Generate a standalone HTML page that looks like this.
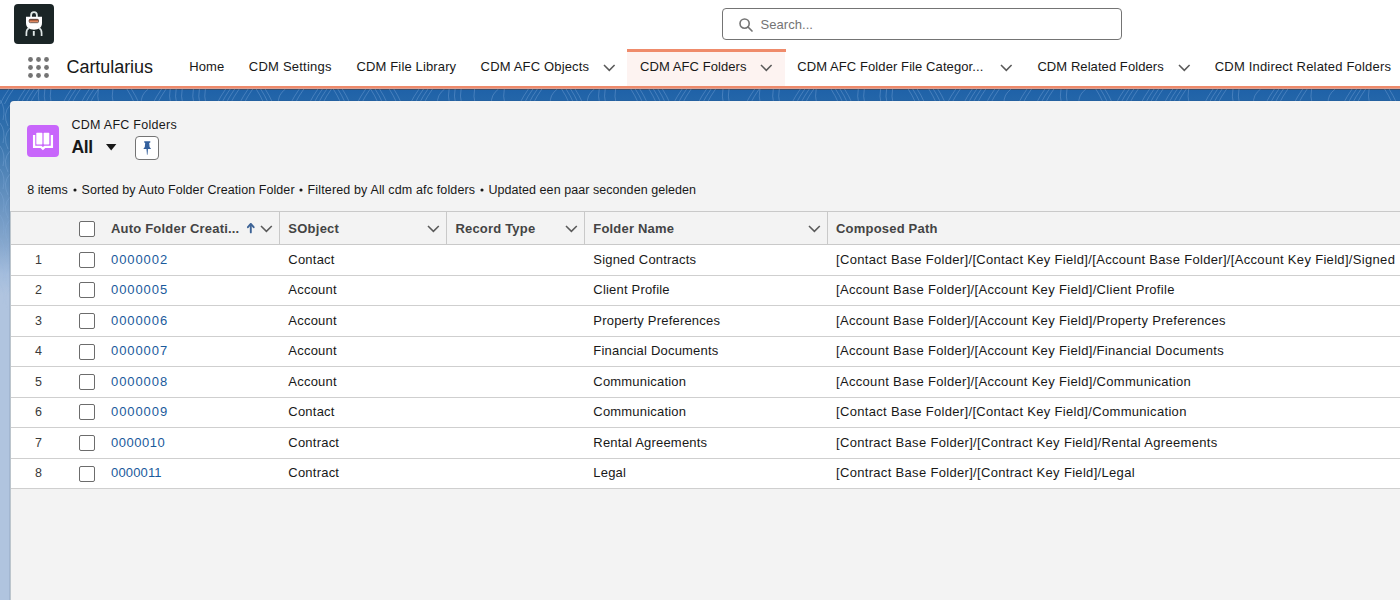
<!DOCTYPE html>
<html><head><meta charset="utf-8"><title>CDM AFC Folders</title>
<style>
html,body{margin:0;padding:0;}
body{width:1400px;height:600px;overflow:hidden;position:relative;background:#b0c4df;font-family:"Liberation Sans", sans-serif;}
.a{position:absolute;}
.t{position:absolute;white-space:nowrap;line-height:1;}
svg.a{overflow:visible;}
</style></head><body>
<div class="a" style="left:0;top:0;width:1400px;height:86px;background:#fff"></div>
<div class="a" style="left:14px;top:4px;width:40px;height:40px;background:#1a2526;border-radius:4px"></div>
<svg class="a" style="left:14px;top:4px" width="40" height="40" viewBox="0 0 40 40">
 <defs><linearGradient id="slot" x1="0" y1="0" x2="0" y2="1"><stop offset="0" stop-color="#6b3a26"/><stop offset="0.55" stop-color="#d9774d"/><stop offset="1" stop-color="#f0c8b0"/></linearGradient></defs>
 <path d="M17.1 12.9 V11.2 A2.9 3 0 0 1 22.9 11.2 V12.9" fill="none" stroke="#dfe8e6" stroke-width="1.8"/>
 <path d="M12 12.75 H28 V19 C28 23.6 24.6 25.7 20 25.7 C15.4 25.7 12 23.6 12 19 Z" fill="#ffffff"/>
 <rect x="15.2" y="15.3" width="9.3" height="3.4" rx="1.1" fill="url(#slot)" stroke="#3e2a22" stroke-width="0.7"/>
 <path d="M14.9 24.3 C13.2 24.9 12.4 26.4 12.4 29 V32" fill="none" stroke="#dfe7e6" stroke-width="1.7"/>
 <path d="M25.1 24.3 C26.8 24.9 27.6 26.4 27.6 29 V32" fill="none" stroke="#dfe7e6" stroke-width="1.7"/>
 <rect x="18.85" y="27" width="1.9" height="4.8" fill="#dfe7e6"/>
</svg>
<div class="a" style="left:722px;top:8px;width:400px;height:32px;box-sizing:border-box;border:1px solid #747474;border-radius:4px;background:#fff"></div>
<svg class="a" style="left:738px;top:17px" width="16" height="16" viewBox="0 0 16 16">
 <circle cx="6.6" cy="6.6" r="4.6" fill="none" stroke="#747474" stroke-width="1.6"/>
 <path d="M10 10 L14 14" stroke="#747474" stroke-width="1.7" stroke-linecap="round"/>
</svg>
<div class="t" style="left:760.50px;top:17.90px;font-size:13px;color:#747474;letter-spacing:0.05px;">Search...</div>
<svg class="a" style="left:24px;top:53px" width="30" height="30" viewBox="0 0 30 30"><circle cx="6.5" cy="6.5" r="2.4" fill="#747474"/><circle cx="6.5" cy="14.5" r="2.4" fill="#747474"/><circle cx="6.5" cy="22.5" r="2.4" fill="#747474"/><circle cx="14.5" cy="6.5" r="2.4" fill="#747474"/><circle cx="14.5" cy="14.5" r="2.4" fill="#747474"/><circle cx="14.5" cy="22.5" r="2.4" fill="#747474"/><circle cx="22.5" cy="6.5" r="2.4" fill="#747474"/><circle cx="22.5" cy="14.5" r="2.4" fill="#747474"/><circle cx="22.5" cy="22.5" r="2.4" fill="#747474"/></svg>
<div class="t" style="left:66.50px;top:57.76px;font-size:18px;color:#181818;letter-spacing:-0.05px;">Cartularius</div>
<div class="a" style="left:627px;top:49px;width:158px;height:37px;background:#fdf3f1"></div>
<div class="a" style="left:627px;top:49px;width:158.5px;height:3px;background:#ef8b6b"></div>
<div class="t" style="left:189.30px;top:60.00px;font-size:13px;color:#181818;letter-spacing:0.1px;">Home</div>
<div class="t" style="left:248.80px;top:60.00px;font-size:13px;color:#181818;letter-spacing:0.22px;">CDM Settings</div>
<div class="t" style="left:356.50px;top:60.00px;font-size:13px;color:#181818;letter-spacing:0.14px;">CDM File Library</div>
<div class="t" style="left:480.60px;top:60.00px;font-size:13px;color:#181818;letter-spacing:0.16px;">CDM AFC Objects</div>
<div class="t" style="left:640.00px;top:60.00px;font-size:13px;color:#181818;letter-spacing:0.07px;">CDM AFC Folders</div>
<div class="t" style="left:797.20px;top:60.00px;font-size:13px;color:#181818;letter-spacing:0.09px;">CDM AFC Folder File Categor...</div>
<div class="t" style="left:1037.40px;top:60.00px;font-size:13px;color:#181818;letter-spacing:0.07px;">CDM Related Folders</div>
<div class="t" style="left:1214.80px;top:60.00px;font-size:13px;color:#181818;letter-spacing:0.18px;">CDM Indirect Related Folders</div>
<svg class="a" style="left:601.70px;top:63.20px" width="14.60" height="9.30" viewBox="0 0 14.60 9.30"><path d="M2 2 L7.30 7.30 L12.60 2" fill="none" stroke="#5a5a5a" stroke-width="1.55" stroke-linecap="butt" stroke-linejoin="miter"/></svg>
<svg class="a" style="left:758.90px;top:63.20px" width="14.60" height="9.30" viewBox="0 0 14.60 9.30"><path d="M2 2 L7.30 7.30 L12.60 2" fill="none" stroke="#5a5a5a" stroke-width="1.55" stroke-linecap="butt" stroke-linejoin="miter"/></svg>
<svg class="a" style="left:998.50px;top:63.20px" width="14.60" height="9.30" viewBox="0 0 14.60 9.30"><path d="M2 2 L7.30 7.30 L12.60 2" fill="none" stroke="#5a5a5a" stroke-width="1.55" stroke-linecap="butt" stroke-linejoin="miter"/></svg>
<svg class="a" style="left:1176.50px;top:63.20px" width="14.60" height="9.30" viewBox="0 0 14.60 9.30"><path d="M2 2 L7.30 7.30 L12.60 2" fill="none" stroke="#5a5a5a" stroke-width="1.55" stroke-linecap="butt" stroke-linejoin="miter"/></svg>
<div class="a" style="left:0;top:86px;width:1400px;height:2px;background:#ee8a6b"></div>
<div class="a" style="left:0;top:88px;width:1400px;height:1px;background:#d9a297"></div>
<div class="a" style="left:0;top:89px;width:1400px;height:1px;background:#3a4f6a"></div>
<div class="a" style="left:0;top:90px;width:1400px;height:510px;background:linear-gradient(to bottom,#1f62a8 0px,#3371ac 44px,#5a8abb 94px,#86a7cd 154px,#a4bddd 184px,#b0c4df 205px,#b0c4df 510px)"></div>
<svg class="a" style="left:0;top:0" width="1400" height="600" viewBox="0 0 1400 600"><defs><linearGradient id="fadeT" x1="0" y1="0" x2="0" y2="1"><stop offset="0.15" stop-color="#fff" stop-opacity="1"/><stop offset="0.45" stop-color="#fff" stop-opacity="0"/></linearGradient><mask id="mT"><rect x="0" y="89" width="1400" height="511" fill="url(#fadeT)"/></mask></defs><path d="M0.0 104 Q4.0 96 9.0 89 M4.5 104 Q8.5 96 13.5 89 M16.2 104 Q20.2 96 25.2 89 M20.7 104 Q24.7 96 29.7 89 M25.2 104 Q29.2 96 34.2 89 M29.7 104 Q33.7 96 38.7 89 M38.9 89 Q37.4 96 39.4 104 M44.9 89 Q43.4 96 45.4 104 M50.9 89 Q49.4 96 51.4 104 M62.4 104 Q66.4 96 71.4 89 M66.9 104 Q70.9 96 75.9 89 M71.4 104 Q75.4 96 80.4 89 M80.5 104 Q84.5 96 89.5 89 M85.0 104 Q89.0 96 94.0 89 M89.5 104 Q93.5 96 98.5 89 M98.4 89 Q96.9 96 98.9 104 M112.9 89 Q111.4 96 113.4 104 M126.9 89 Q130.9 95 134.9 104 M131.4 89 Q135.4 95 139.4 104 M148.3 89 Q140.3 95 141.3 104 M152.6 104 Q156.6 96 161.6 89 M157.1 104 Q161.1 96 166.1 89 M170.2 89 Q168.7 96 170.7 104 M176.2 89 Q174.7 96 176.7 104 M182.2 89 Q180.7 96 182.7 104 M193.4 89 Q191.9 96 193.9 104 M199.4 89 Q197.9 96 199.9 104 M205.4 89 Q203.9 96 205.9 104 M216.7 104 Q220.7 96 225.7 89 M221.2 104 Q225.2 96 230.2 89 M225.7 104 Q229.7 96 234.7 89 M230.2 104 Q234.2 96 239.2 89 M239.2 104 Q243.2 96 248.2 89 M243.7 104 Q247.7 96 252.7 89 M256.2 89 Q260.2 95 264.2 104 M260.7 89 Q264.7 95 268.7 104 M265.2 89 Q269.2 95 273.2 104 M285.4 89 Q277.4 95 278.4 104 M290.3 104 Q294.3 96 299.3 89 M294.8 104 Q298.8 96 303.8 89 M308.9 104 Q312.9 96 317.9 89 M313.4 104 Q317.4 96 322.4 89 M317.9 104 Q321.9 96 326.9 89 M322.4 104 Q326.4 96 331.4 89 M333.3 89 Q337.3 95 341.3 104 M337.8 89 Q341.8 95 345.8 104 M342.3 89 Q346.3 95 350.3 104 M356.7 104 Q360.7 96 365.7 89 M361.2 104 Q365.2 96 370.2 89 M370.6 89 Q374.6 95 378.6 104 M375.1 89 Q379.1 95 383.1 104 M379.6 89 Q383.6 95 387.6 104 M389.3 89 Q393.3 95 397.3 104 M393.8 89 Q397.8 95 401.8 104 M410.0 104 Q414.0 96 419.0 89 M414.5 104 Q418.5 96 423.5 89 M419.0 104 Q423.0 96 428.0 89 M423.5 104 Q427.5 96 432.5 89 M444.6 89 Q436.6 95 437.6 104 M449.1 89 Q447.6 96 449.6 104 M455.1 89 Q453.6 96 455.6 104 M461.1 89 Q459.6 96 461.6 104 M474.6 89 Q473.1 96 475.1 104 M498.5 89 Q490.5 95 491.5 104 M504.3 89 Q502.8 96 504.8 104 M519.4 104 Q523.4 96 528.4 89 M523.9 104 Q527.9 96 532.9 89 M528.4 104 Q532.4 96 537.4 89 M532.9 104 Q536.9 96 541.9 89 M557.3 89 Q549.3 95 550.3 104 M561.6 89 Q565.6 95 569.6 104 M566.1 89 Q570.1 95 574.1 104 M570.6 89 Q574.6 95 578.6 104 M575.1 89 Q579.1 95 583.1 104 M594.4 89 Q586.4 95 587.4 104 M599.2 89 Q597.7 96 599.7 104 M605.2 89 Q603.7 96 605.7 104 M615.6 89 Q614.1 96 616.1 104 M630.8 89 Q634.8 95 638.8 104 M635.3 89 Q639.3 95 643.3 104 M639.8 89 Q643.8 95 647.8 104 M648.9 89 Q652.9 95 656.9 104 M653.4 89 Q657.4 95 661.4 104 M657.9 89 Q661.9 95 665.9 104 M662.4 89 Q666.4 95 670.4 104 M673.2 104 Q677.2 96 682.2 89 M677.7 104 Q681.7 96 686.7 89 M682.2 104 Q686.2 96 691.2 89 M697.6 104 Q701.6 96 706.6 89 M702.1 104 Q706.1 96 711.1 89 M706.6 104 Q710.6 96 715.6 89 M723.0 89 Q721.5 96 723.5 104 M729.0 89 Q727.5 96 729.5 104 M745.7 104 Q749.7 96 754.7 89 M750.2 104 Q754.2 96 759.2 89 M759.9 89 Q758.4 96 760.4 104 M773.3 89 Q771.8 96 773.8 104 M779.3 89 Q777.8 96 779.8 104 M791.3 104 Q795.3 96 800.3 89 M795.8 104 Q799.8 96 804.8 89 M800.3 104 Q804.3 96 809.3 89 M804.8 104 Q808.8 96 813.8 89 M816.2 89 Q814.7 96 816.7 104 M831.0 89 Q835.0 95 839.0 104 M835.5 89 Q839.5 95 843.5 104 M840.0 89 Q844.0 95 848.0 104 M844.5 89 Q848.5 95 852.5 104 M858.3 89 Q856.8 96 858.8 104 M864.3 89 Q862.8 96 864.8 104 M880.6 89 Q879.1 96 881.1 104 M886.6 89 Q885.1 96 887.1 104 M892.6 89 Q891.1 96 893.1 104 M908.2 89 Q912.2 95 916.2 104 M912.7 89 Q916.7 95 920.7 104 M917.2 89 Q921.2 95 925.2 104 M928.8 89 Q932.8 95 936.8 104 M933.3 89 Q937.3 95 941.3 104 M937.8 89 Q941.8 95 945.8 104 M946.8 104 Q950.8 96 955.8 89 M951.3 104 Q955.3 96 960.3 89 M963.3 104 Q967.3 96 972.3 89 M967.8 104 Q971.8 96 976.8 89 M972.3 104 Q976.3 96 981.3 89 M976.8 104 Q980.8 96 985.8 89 M985.8 104 Q989.8 96 994.8 89 M990.3 104 Q994.3 96 999.3 89 M1011.1 89 Q1003.1 95 1004.1 104 M1018.0 104 Q1022.0 96 1027.0 89 M1022.5 104 Q1026.5 96 1031.5 89 M1035.9 104 Q1039.9 96 1044.9 89 M1040.4 104 Q1044.4 96 1049.4 89 M1044.9 104 Q1048.9 96 1053.9 89 M1061.0 89 Q1059.5 96 1061.5 104 M1067.0 89 Q1065.5 96 1067.5 104 M1085.9 89 Q1077.9 95 1078.9 104 M1095.8 89 Q1099.8 95 1103.8 104 M1100.3 89 Q1104.3 95 1108.3 104 M1104.8 89 Q1108.8 95 1112.8 104 M1115.8 104 Q1119.8 96 1124.8 89 M1120.3 104 Q1124.3 96 1129.3 89 M1124.8 104 Q1128.8 96 1133.8 89 M1129.3 104 Q1133.3 96 1138.3 89 M1140.6 104 Q1144.6 96 1149.6 89 M1145.1 104 Q1149.1 96 1154.1 89 M1149.6 104 Q1153.6 96 1158.6 89 M1154.1 104 Q1158.1 96 1163.1 89 M1163.8 104 Q1167.8 96 1172.8 89 M1168.3 104 Q1172.3 96 1177.3 89 M1172.8 104 Q1176.8 96 1181.8 89 M1177.3 104 Q1181.3 96 1186.3 89 M1188.7 89 Q1187.2 96 1189.2 104 M1204.1 104 Q1208.1 96 1213.1 89 M1208.6 104 Q1212.6 96 1217.6 89 M1213.1 104 Q1217.1 96 1222.1 89 M1217.6 104 Q1221.6 96 1226.6 89 M1233.0 89 Q1231.5 96 1233.5 104 M1239.0 89 Q1237.5 96 1239.5 104 M1260.6 89 Q1252.6 95 1253.6 104 M1265.4 104 Q1269.4 96 1274.4 89 M1269.9 104 Q1273.9 96 1278.9 89 M1274.4 104 Q1278.4 96 1283.4 89 M1278.9 104 Q1282.9 96 1287.9 89 M1293.7 104 Q1297.7 96 1302.7 89 M1298.2 104 Q1302.2 96 1307.2 89 M1311.6 89 Q1310.1 96 1312.1 104 M1335.2 89 Q1327.2 95 1328.2 104 M1343.1 104 Q1347.1 96 1352.1 89 M1347.6 104 Q1351.6 96 1356.6 89 M1352.1 104 Q1356.1 96 1361.1 89 M1356.6 104 Q1360.6 96 1365.6 89 M1369.1 89 Q1367.6 96 1369.6 104 M1384.6 89 Q1388.6 95 1392.6 104 M1389.1 89 Q1393.1 95 1397.1 104 M0 100 Q6 108 3 120 M10 105 Q2 114 8 126 M0 123 Q6 131 3 143 M10 128 Q2 137 8 149 M0 146 Q6 154 3 166 M10 151 Q2 160 8 172 M0 169 Q6 177 3 189 M10 174 Q2 183 8 195 M0 192 Q6 200 3 212 M10 197 Q2 206 8 218 M0 215 Q6 223 3 235 M10 220 Q2 229 8 241 M0 238 Q6 246 3 258 M10 243 Q2 252 8 264 M0 261 Q6 269 3 281 M10 266 Q2 275 8 287 M0 284 Q6 292 3 304 M10 289 Q2 298 8 310" fill="none" stroke="#8fb7e6" stroke-opacity="0.38" stroke-width="0.9" mask="url(#mT)"/></svg>
<div class="a" style="left:10px;top:101px;width:1400px;height:520px;background:#f3f3f3;border-radius:4px;box-shadow:-1px 0 0 0 rgba(40,60,90,0.10), 0 -1px 0 0 rgba(40,60,90,0.10)"></div>
<div class="a" style="left:27px;top:125px;width:32px;height:32px;background:#c866fb;border-radius:4px"></div>
<svg class="a" style="left:27px;top:125px" width="32" height="32" viewBox="0 0 32 32">
 <rect x="9.3" y="7.8" width="6.1" height="11.6" rx="0.6" fill="#fff"/>
 <rect x="16.6" y="7.8" width="5.7" height="11.6" rx="0.6" fill="#fff"/>
 <path d="M7.1 10 V21.8 H14 L15.9 23.6 L17.8 21.8 H24.9 V10" fill="none" stroke="#fff" stroke-width="2.3" stroke-linejoin="miter"/>
</svg>
<div class="t" style="left:71.40px;top:119.02px;font-size:12.5px;color:#181818;letter-spacing:0.28px;">CDM AFC Folders</div>
<div class="t" style="left:71.60px;top:138.59px;font-size:17.5px;color:#181818;font-weight:700;letter-spacing:-0.4px;">All</div>
<svg class="a" style="left:106px;top:143.7px" width="10.4" height="6.5" viewBox="0 0 10.4 6.5"><path d="M0 0 H10.4 L5.2 6.5 Z" fill="#181818"/></svg>
<div class="a" style="left:135px;top:136px;width:24px;height:24px;box-sizing:border-box;border:1px solid #747474;border-radius:4px;background:#fff"></div>
<svg class="a" style="left:135px;top:136px" width="24" height="24" viewBox="0 0 24 24">
 <path d="M9.2 5.3 H15.3 V6.6 L14.2 7.1 L14.6 11.1 L16.1 12.9 H8.3 L9.8 11.1 L10.2 7.1 L9.2 6.6 Z" fill="#33609d"/>
 <path d="M11.45 12.6 H13.0 L12.5 18.8 H11.95 Z" fill="#33609d"/>
</svg>
<div class="t" style="left:27.20px;top:184.02px;font-size:12.5px;color:#181818;letter-spacing:0.05px;">8 items</div>
<svg class="a" style="left:72.10px;top:187.0px" width="6" height="6" viewBox="0 0 6 6"><circle cx="3" cy="3" r="1.55" fill="#181818"/></svg>
<div class="t" style="left:81.50px;top:184.02px;font-size:12.5px;color:#181818;letter-spacing:0.07px;">Sorted by Auto Folder Creation Folder</div>
<svg class="a" style="left:298.1px;top:187.0px" width="6" height="6" viewBox="0 0 6 6"><circle cx="3" cy="3" r="1.55" fill="#181818"/></svg>
<div class="t" style="left:307.60px;top:184.02px;font-size:12.5px;color:#181818;letter-spacing:0.14px;">Filtered by All cdm afc folders</div>
<svg class="a" style="left:479.1px;top:187.0px" width="6" height="6" viewBox="0 0 6 6"><circle cx="3" cy="3" r="1.55" fill="#181818"/></svg>
<div class="t" style="left:488.40px;top:184.02px;font-size:12.5px;color:#181818;letter-spacing:0.06px;">Updated een paar seconden geleden</div>
<div class="a" style="left:10px;top:211px;width:1px;height:389px;background:#bcc5cc"></div>
<div class="a" style="left:11px;top:211px;width:1400px;height:1px;background:#c9c9c9"></div>
<div class="a" style="left:11px;top:212px;width:1400px;height:32px;background:#f3f3f3"></div>
<div class="a" style="left:11px;top:244px;width:1400px;height:1px;background:#c9c9c9"></div>
<div class="a" style="left:279px;top:212px;width:1px;height:32px;background:#c9c9c9"></div>
<div class="a" style="left:446px;top:212px;width:1px;height:32px;background:#c9c9c9"></div>
<div class="a" style="left:584px;top:212px;width:1px;height:32px;background:#c9c9c9"></div>
<div class="a" style="left:827px;top:212px;width:1px;height:32px;background:#c9c9c9"></div>
<div class="a" style="left:79px;top:221px;width:16px;height:16px;box-sizing:border-box;border:1px solid #6c6c6c;border-radius:2px;background:#fff"></div>
<div class="t" style="left:111.00px;top:222.00px;font-size:13px;color:#444444;font-weight:700;letter-spacing:0.2px;">Auto Folder Creati...</div>
<svg class="a" style="left:240px;top:218px" width="20" height="20" viewBox="0 0 20 20">
 <path d="M7.9 9.2 L10.8 5.9 L13.7 9.2" fill="none" stroke="#3d6396" stroke-width="1.9" stroke-linecap="round" stroke-linejoin="round"/>
 <path d="M10.8 6.4 V14.4" stroke="#3d6396" stroke-width="1.9" stroke-linecap="round"/>
</svg>
<svg class="a" style="left:258.70px;top:224.20px" width="14.80" height="9.30" viewBox="0 0 14.80 9.30"><path d="M2 2 L7.40 7.30 L12.80 2" fill="none" stroke="#5a5a5a" stroke-width="1.55" stroke-linecap="butt" stroke-linejoin="miter"/></svg>
<div class="t" style="left:288.30px;top:222.00px;font-size:13px;color:#444444;font-weight:700;letter-spacing:0.25px;">SObject</div>
<svg class="a" style="left:425.50px;top:224.20px" width="14.80" height="9.30" viewBox="0 0 14.80 9.30"><path d="M2 2 L7.40 7.30 L12.80 2" fill="none" stroke="#5a5a5a" stroke-width="1.55" stroke-linecap="butt" stroke-linejoin="miter"/></svg>
<div class="t" style="left:455.40px;top:222.00px;font-size:13px;color:#444444;font-weight:700;letter-spacing:0.2px;">Record Type</div>
<svg class="a" style="left:563.80px;top:224.20px" width="14.80" height="9.30" viewBox="0 0 14.80 9.30"><path d="M2 2 L7.40 7.30 L12.80 2" fill="none" stroke="#5a5a5a" stroke-width="1.55" stroke-linecap="butt" stroke-linejoin="miter"/></svg>
<div class="t" style="left:593.30px;top:222.00px;font-size:13px;color:#444444;font-weight:700;letter-spacing:0.19px;">Folder Name</div>
<svg class="a" style="left:806.50px;top:224.20px" width="14.80" height="9.30" viewBox="0 0 14.80 9.30"><path d="M2 2 L7.40 7.30 L12.80 2" fill="none" stroke="#5a5a5a" stroke-width="1.55" stroke-linecap="butt" stroke-linejoin="miter"/></svg>
<div class="t" style="left:836.00px;top:222.00px;font-size:13px;color:#444444;font-weight:700;letter-spacing:0.2px;">Composed Path</div>
<div class="a" style="left:11px;top:245.0px;width:1400px;height:29.5px;background:#fff"></div>
<div class="a" style="left:11px;top:274.5px;width:1400px;height:1px;background:#cfcfcf"></div>
<div class="t" style="left:11px;width:55px;text-align:center;top:253.72px;font-size:12.5px;color:#3a3a3a">1</div>
<div class="a" style="left:79px;top:252px;width:16px;height:16px;box-sizing:border-box;border:1px solid #6c6c6c;border-radius:2px;background:#fff"></div>
<div class="t" style="left:111.00px;top:252.70px;font-size:13px;color:#1a5a9c;letter-spacing:0.92px;">0000002</div>
<div class="t" style="left:288.30px;top:252.70px;font-size:13px;color:#181818;letter-spacing:0.22px;">Contact</div>
<div class="t" style="left:593.30px;top:252.70px;font-size:13px;color:#181818;letter-spacing:0.2px;">Signed Contracts</div>
<div class="t" style="left:836.00px;top:252.70px;font-size:13px;color:#181818;letter-spacing:0.32px;width:561px;clip-path:inset(-6px 0 -6px 0);overflow:visible;">[Contact Base Folder]/[Contact Key Field]/[Account Base Folder]/[Account Key Field]/Signed Contracts</div>
<div class="a" style="left:11px;top:275.5px;width:1400px;height:29.5px;background:#fff"></div>
<div class="a" style="left:11px;top:305.0px;width:1400px;height:1px;background:#cfcfcf"></div>
<div class="t" style="left:11px;width:55px;text-align:center;top:284.22px;font-size:12.5px;color:#3a3a3a">2</div>
<div class="a" style="left:79px;top:282px;width:16px;height:16px;box-sizing:border-box;border:1px solid #6c6c6c;border-radius:2px;background:#fff"></div>
<div class="t" style="left:111.00px;top:283.20px;font-size:13px;color:#1a5a9c;letter-spacing:0.92px;">0000005</div>
<div class="t" style="left:288.30px;top:283.20px;font-size:13px;color:#181818;letter-spacing:0.22px;">Account</div>
<div class="t" style="left:593.30px;top:283.20px;font-size:13px;color:#181818;letter-spacing:0.2px;">Client Profile</div>
<div class="t" style="left:836.00px;top:283.20px;font-size:13px;color:#181818;letter-spacing:0.32px;width:561px;clip-path:inset(-6px 0 -6px 0);overflow:visible;">[Account Base Folder]/[Account Key Field]/Client Profile</div>
<div class="a" style="left:11px;top:306.0px;width:1400px;height:29.5px;background:#fff"></div>
<div class="a" style="left:11px;top:335.5px;width:1400px;height:1px;background:#cfcfcf"></div>
<div class="t" style="left:11px;width:55px;text-align:center;top:314.72px;font-size:12.5px;color:#3a3a3a">3</div>
<div class="a" style="left:79px;top:313px;width:16px;height:16px;box-sizing:border-box;border:1px solid #6c6c6c;border-radius:2px;background:#fff"></div>
<div class="t" style="left:111.00px;top:313.70px;font-size:13px;color:#1a5a9c;letter-spacing:0.92px;">0000006</div>
<div class="t" style="left:288.30px;top:313.70px;font-size:13px;color:#181818;letter-spacing:0.22px;">Account</div>
<div class="t" style="left:593.30px;top:313.70px;font-size:13px;color:#181818;letter-spacing:0.2px;">Property Preferences</div>
<div class="t" style="left:836.00px;top:313.70px;font-size:13px;color:#181818;letter-spacing:0.32px;width:561px;clip-path:inset(-6px 0 -6px 0);overflow:visible;">[Account Base Folder]/[Account Key Field]/Property Preferences</div>
<div class="a" style="left:11px;top:336.5px;width:1400px;height:29.5px;background:#fff"></div>
<div class="a" style="left:11px;top:366.0px;width:1400px;height:1px;background:#cfcfcf"></div>
<div class="t" style="left:11px;width:55px;text-align:center;top:345.22px;font-size:12.5px;color:#3a3a3a">4</div>
<div class="a" style="left:79px;top:344px;width:16px;height:16px;box-sizing:border-box;border:1px solid #6c6c6c;border-radius:2px;background:#fff"></div>
<div class="t" style="left:111.00px;top:344.20px;font-size:13px;color:#1a5a9c;letter-spacing:0.92px;">0000007</div>
<div class="t" style="left:288.30px;top:344.20px;font-size:13px;color:#181818;letter-spacing:0.22px;">Account</div>
<div class="t" style="left:593.30px;top:344.20px;font-size:13px;color:#181818;letter-spacing:0.2px;">Financial Documents</div>
<div class="t" style="left:836.00px;top:344.20px;font-size:13px;color:#181818;letter-spacing:0.32px;width:561px;clip-path:inset(-6px 0 -6px 0);overflow:visible;">[Account Base Folder]/[Account Key Field]/Financial Documents</div>
<div class="a" style="left:11px;top:367.0px;width:1400px;height:29.5px;background:#fff"></div>
<div class="a" style="left:11px;top:396.5px;width:1400px;height:1px;background:#cfcfcf"></div>
<div class="t" style="left:11px;width:55px;text-align:center;top:375.72px;font-size:12.5px;color:#3a3a3a">5</div>
<div class="a" style="left:79px;top:374px;width:16px;height:16px;box-sizing:border-box;border:1px solid #6c6c6c;border-radius:2px;background:#fff"></div>
<div class="t" style="left:111.00px;top:374.70px;font-size:13px;color:#1a5a9c;letter-spacing:0.92px;">0000008</div>
<div class="t" style="left:288.30px;top:374.70px;font-size:13px;color:#181818;letter-spacing:0.22px;">Account</div>
<div class="t" style="left:593.30px;top:374.70px;font-size:13px;color:#181818;letter-spacing:0.2px;">Communication</div>
<div class="t" style="left:836.00px;top:374.70px;font-size:13px;color:#181818;letter-spacing:0.32px;width:561px;clip-path:inset(-6px 0 -6px 0);overflow:visible;">[Account Base Folder]/[Account Key Field]/Communication</div>
<div class="a" style="left:11px;top:397.5px;width:1400px;height:29.5px;background:#fff"></div>
<div class="a" style="left:11px;top:427.0px;width:1400px;height:1px;background:#cfcfcf"></div>
<div class="t" style="left:11px;width:55px;text-align:center;top:406.22px;font-size:12.5px;color:#3a3a3a">6</div>
<div class="a" style="left:79px;top:404px;width:16px;height:16px;box-sizing:border-box;border:1px solid #6c6c6c;border-radius:2px;background:#fff"></div>
<div class="t" style="left:111.00px;top:405.20px;font-size:13px;color:#1a5a9c;letter-spacing:0.92px;">0000009</div>
<div class="t" style="left:288.30px;top:405.20px;font-size:13px;color:#181818;letter-spacing:0.22px;">Contact</div>
<div class="t" style="left:593.30px;top:405.20px;font-size:13px;color:#181818;letter-spacing:0.2px;">Communication</div>
<div class="t" style="left:836.00px;top:405.20px;font-size:13px;color:#181818;letter-spacing:0.32px;width:561px;clip-path:inset(-6px 0 -6px 0);overflow:visible;">[Contact Base Folder]/[Contact Key Field]/Communication</div>
<div class="a" style="left:11px;top:428.0px;width:1400px;height:29.5px;background:#fff"></div>
<div class="a" style="left:11px;top:457.5px;width:1400px;height:1px;background:#cfcfcf"></div>
<div class="t" style="left:11px;width:55px;text-align:center;top:436.72px;font-size:12.5px;color:#3a3a3a">7</div>
<div class="a" style="left:79px;top:435px;width:16px;height:16px;box-sizing:border-box;border:1px solid #6c6c6c;border-radius:2px;background:#fff"></div>
<div class="t" style="left:111.00px;top:435.70px;font-size:13px;color:#1a5a9c;letter-spacing:0.5px;">0000010</div>
<div class="t" style="left:288.30px;top:435.70px;font-size:13px;color:#181818;letter-spacing:0.22px;">Contract</div>
<div class="t" style="left:593.30px;top:435.70px;font-size:13px;color:#181818;letter-spacing:0.2px;">Rental Agreements</div>
<div class="t" style="left:836.00px;top:435.70px;font-size:13px;color:#181818;letter-spacing:0.32px;width:561px;clip-path:inset(-6px 0 -6px 0);overflow:visible;">[Contract Base Folder]/[Contract Key Field]/Rental Agreements</div>
<div class="a" style="left:11px;top:458.5px;width:1400px;height:29.5px;background:#fff"></div>
<div class="a" style="left:11px;top:488.0px;width:1400px;height:1px;background:#cfcfcf"></div>
<div class="t" style="left:11px;width:55px;text-align:center;top:467.22px;font-size:12.5px;color:#3a3a3a">8</div>
<div class="a" style="left:79px;top:466px;width:16px;height:16px;box-sizing:border-box;border:1px solid #6c6c6c;border-radius:2px;background:#fff"></div>
<div class="t" style="left:111.00px;top:466.20px;font-size:13px;color:#1a5a9c;letter-spacing:0.15px;">0000011</div>
<div class="t" style="left:288.30px;top:466.20px;font-size:13px;color:#181818;letter-spacing:0.22px;">Contract</div>
<div class="t" style="left:593.30px;top:466.20px;font-size:13px;color:#181818;letter-spacing:0.2px;">Legal</div>
<div class="t" style="left:836.00px;top:466.20px;font-size:13px;color:#181818;letter-spacing:0.32px;width:561px;clip-path:inset(-6px 0 -6px 0);overflow:visible;">[Contract Base Folder]/[Contract Key Field]/Legal</div>
</body></html>
